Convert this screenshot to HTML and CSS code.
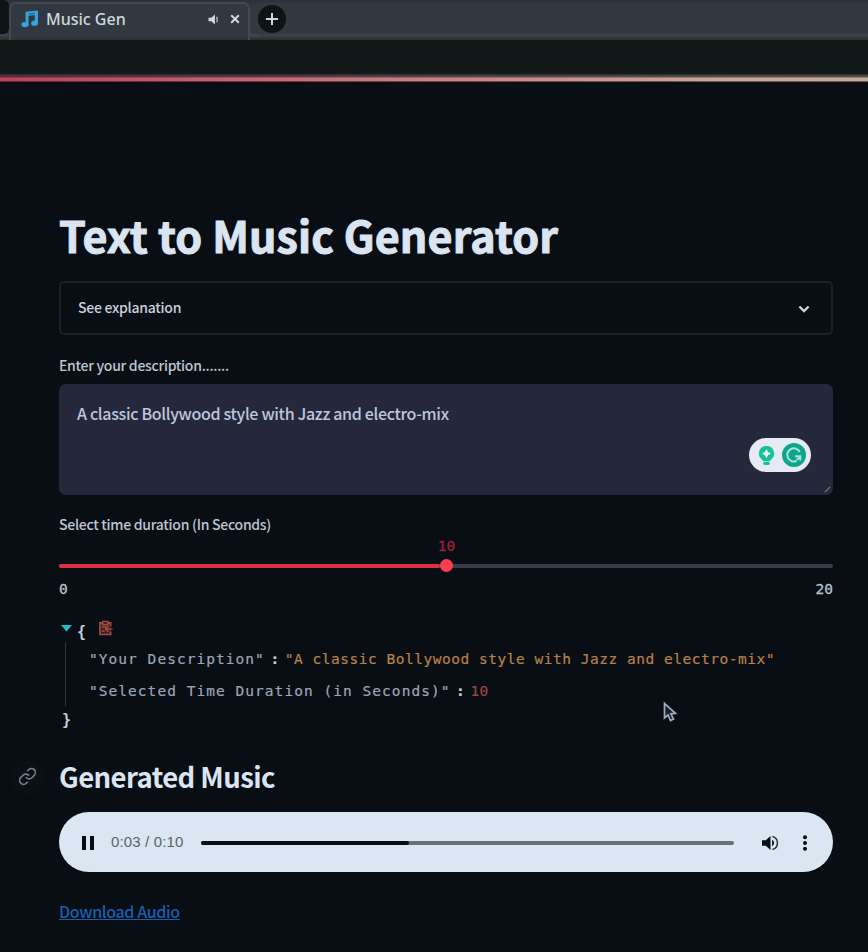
FILE: index.html
```html
<!DOCTYPE html>
<html lang="en">
<head>
<meta charset="utf-8">
<title>Music Gen</title>
<link rel="stylesheet" href="styles.css">
</head>
<body>
<header class="tabs">
  <div class="prev-tab"></div>
  <div class="tab">
    <svg class="note" viewBox="0 0 18 18"><path d="M4.600 1.800 17 .600v12.300H13.800V5L7.500 5.800v9.200H4.600z"/><path class="hole" d="M7.500 3.600 13.800 3v1L7.500 4.700z"/><ellipse cx="4" cy="14.600" rx="3.600" ry="2.600"/><ellipse cx="13.600" cy="13.200" rx="3.400" ry="2.600"/></svg>
    <span class="tab-title">Music Gen</span>
    <svg class="sound" viewBox="0 0 12 12"><path d="M0 4h3l4-3.400v10.800L3 8H0z"/><path class="wave" d="M9 3q1 3 0 6"/></svg>
    <svg class="close" viewBox="0 0 10 10"><path d="m1.200 1.200 7.600 7.600m0-7.600L1.200 8.800"/></svg>
  </div>
  <div class="new-tab"><svg viewBox="0 0 12 12"><path d="M6 0v12M0 6h12"/></svg></div>
</header>
<div class="toolbar"></div>
<div class="decoration"></div>
<main>
  <h1><span>Text to Music Generator</span></h1>
  <section class="expander">
    <span class="expander-label">See explanation</span>
    <svg viewBox="0 0 12 8"><path d="m1.400 1.500 4.600 4.600 4.600-4.600"/></svg>
  </section>
  <div class="label desc-label"><span>Enter your description.......</span></div>
  <div class="textarea">
    <span class="value">A classic Bollywood style with Jazz and electro-mix</span>
    <div class="assistant">
      <svg class="bulb" viewBox="0 0 18 22"><path d="M9 1a8 8 0 0 1 5 14.300L12.500 17h-7L4 15.300A8 8 0 0 1 9 1z"/><rect x="5.500" y="18" width="7" height="3" rx="1.500"/><path class="spark" d="M9 4.200 10.700 7.300 13.800 9l-3.100 1.700L9 13.800l-1.700-3.100L4.200 9l3.100-1.700z"/></svg>
      <svg class="g-logo" viewBox="0 0 24 24"><circle cx="12" cy="12" r="12"/><path d="M17.800 9A6.600 6.600 0 1 0 14.500 18M13 13.200h5.300v4.300M18 13.500l-3.200 3.600"/></svg>
    </div>
    <svg class="grip" viewBox="0 0 8 8"><path d="m1 7 6-6"/></svg>
  </div>
  <div class="label time-label"><span>Select time duration (In Seconds)</span></div>
  <div class="slider">
    <div class="mono thumb-value">10</div>
    <div class="track"><div class="filled"></div><div class="thumb"></div></div>
    <div class="mono limits"><span>0</span><span>20</span></div>
  </div>
  <div class="mono json">
    <div class="open"><svg class="arrow" viewBox="0 0 11 7"><path d="M0 0h11L5.500 6.500z"/></svg><span class="brace">{</span>
      <svg class="clip" viewBox="0 0 16 17"><path class="board" d="M2 3h11.500v12.500H2z"/><path d="M5 3H2v12.500h11.500V12M10.500 3h3v4M5 1.500h5.500v3.500H5zM4 7.500h5M4 12h3M15.500 9.500H8m3-3-3 3 3 3"/></svg></div>
    <div class="entries">
      <div class="row"><span class="key">"Your Description"</span><span class="colon">:</span><span class="string">"A classic Bollywood style with Jazz and electro-mix"</span></div>
      <div class="row"><span class="key">"Selected Time Duration (in Seconds)"</span><span class="colon">:</span><span class="number">10</span></div>
    </div>
    <div class="shut brace">}</div>
  </div>
  <div class="heading">
    <svg class="link" viewBox="0 0 24 24"><path d="M10 13a5 5 0 0 0 7.540.54l3-3a5 5 0 0 0-7.070-7.070l-1.720 1.710M14 11a5 5 0 0 0-7.540-.54l-3 3a5 5 0 0 0 7.070 7.070l1.710-1.710"/></svg>
    <h2><span>Generated Music</span></h2>
  </div>
  <div class="player">
    <svg class="pause" viewBox="0 0 12 14"><path d="M0 0h4v14H0zM8 0h4v14H8z"/></svg>
    <span class="time">0:03 / 0:10</span>
    <div class="seek"><div class="played"></div></div>
    <svg class="volume" viewBox="0 0 18 16"><path d="M0 5h4l5-4.500v15L4 11H0z"/><path d="M10.700 4.500a4 4 0 0 1 0 7z"/><path class="wave" d="M11 1.200a7 7 0 0 1 0 13.600"/></svg>
    <svg class="more" viewBox="0 0 4 16"><circle cx="2" cy="2.200" r="2"/><circle cx="2" cy="8" r="2"/><circle cx="2" cy="13.800" r="2"/></svg>
  </div>
  <a class="download"><span>Download Audio</span></a>
</main>
<svg class="cursor" viewBox="0 0 14 20"><path d="M1.500 1.500v14.500l3.500-3 2.500 5.500 3-1.400-2.600-5.300 4.600-.5z"/></svg>
</body>
</html>
```
FILE: styles.css
```css
* { box-sizing: border-box; }
body { margin: 0; width: 868px; height: 952px; overflow: hidden; background: #090d14; color: #dbe5f2; font-family: "Noto Sans CJK JP", "Noto Sans", sans-serif; white-space: nowrap; }
svg { display: block; flex: none; overflow: visible; fill: none; }
.tabs { height: 40px; display: flex; background: linear-gradient(#293037 0, #31383f 4px, #31383f 33px, #3d444a 35px, #30363a 38px, #262c2e 40px); }
.prev-tab { width: 9px; height: 34px; background: #0d1214; border-radius: 0 6px 6px 0; }
.tab { position: relative; width: 241px; height: 38px; margin-top: 2px; padding: 0 14px 6px 10px; display: flex; align-items: center; background: linear-gradient(#31383f 0, #31383f 90%, #2b3236); border: 2px solid #41484f; border-bottom: 0; border-radius: 7px 7px 0 0; }
.tab::after { content: ""; position: absolute; left: 237px; bottom: 3px; width: 9px; height: 9px; border: solid #41484f; border-width: 0 0 2px 2px; border-radius: 0 0 0 7px; }
.note { width: 18px; height: 18px; fill: #35a4df; }
.note .hole { fill: #1c6089; }
.tab-title { flex: none; margin-left: 7px; font: 500 16px/22px "Noto Sans", sans-serif; color: #d0d8df; width: 162px; }
.sound { width: 12px; height: 11px; fill: #d0d8df; }
.wave { fill: none; stroke: #d0d8df; stroke-width: 1.3; }
.close { width: 10px; height: 10px; margin-left: 10px; stroke: #d0d8df; stroke-width: 2; }
.new-tab { width: 28px; height: 28px; margin: 5px 0 0 8px; border-radius: 50%; background: #0e1315; display: grid; place-items: center; position: relative; }
.new-tab svg { width: 12px; height: 12px; stroke: #d0d8df; stroke-width: 2; }
.toolbar { height: 34px; background: #131819; }
.decoration { height: 9px; background: linear-gradient(#292c2e 0, #292c2eaa 3px, transparent 4px 7px, #14090d 8px, #090d14), linear-gradient(90deg, #bd405c, #c97982 45%, #c8a79c 85%, #c4ab97); }
main { padding: 125px 35px 0 59px; }
h1, h2 { margin: 0; }
h1 { height: 54px; font-size: 43px; line-height: 53px; font-weight: 700; letter-spacing: .120px; -webkit-text-stroke: 1px #dbe5f2; }
.expander { margin-top: 19px; height: 54px; padding: 0 21px 0 17px; display: flex; align-items: center; justify-content: space-between; border: 2px solid #1c2128; border-radius: 5px; font-size: 14px; line-height: 24px; color: #c8d1dc; }
.expander-label { position: relative; top: -1px; font-weight: 500; letter-spacing: -.270px; }
.expander svg { width: 12px; height: 8px; stroke: #ced6df; stroke-width: 2.3; position: relative; top: 1px; }
.label { height: 24px; font-size: 14px; line-height: 24px; color: #bdc6d2; font-weight: 500; letter-spacing: -.280px; }
.desc-label { margin-top: 18px; }
.textarea { position: relative; height: 111px; margin-top: 7px; padding: 17px 18px; border-radius: 7px; background: #25283a; font-size: 16px; line-height: 24px; color: #bcc7dd; font-weight: 500; letter-spacing: -.320px; }
.assistant { position: absolute; right: 22px; top: 54px; width: 62px; height: 34px; padding: 0 5px 0 9px; display: flex; align-items: center; justify-content: space-between; border-radius: 17px; background: #e5eaf4; }
.bulb { width: 17px; height: 21px; fill: #12c29b; }
.bulb .spark { fill: #e8f5f6; }
.g-logo { width: 24px; height: 24px; fill: #0fa58d; }
.g-logo path { fill: none; stroke: #a9e3dc; stroke-width: 2; }
.grip { position: absolute; right: 2px; bottom: 2px; width: 7px; height: 7px; stroke: #7b808d; stroke-width: 1.2; }
.time-label { margin-top: 17px; }
.mono { font-family: "DejaVu Sans Mono", monospace; }
.thumb-value { width: 775px; height: 20px; line-height: 21px; text-align: center; font-size: 14.500px; color: #a31d3c; -webkit-text-stroke: .3px; }
.track { height: 4px; margin-top: 7.500px; display: flex; align-items: center; border-radius: 2px; background: #363c48; }
.filled { width: 381px; height: 4px; border-radius: 2px; background: #dd3046; }
.thumb { width: 13px; height: 13px; border-radius: 50%; background: #ff3c4e; }
.limits { height: 22px; margin-top: 10.500px; display: flex; justify-content: space-between; font-size: 14.500px; line-height: 23px; color: #b9c3d0; -webkit-text-stroke: .3px; }
.json { margin-top: 18px; font-size: 14.500px; }
.open { height: 24px; display: flex; }
.arrow { width: 11px; height: 7px; margin: 7px 0 0 2px; fill: #18bfc6; }
.brace { font-weight: 700; color: #c5ced9; font-size: 15px; line-height: 28px; }
.open .brace { margin-left: 5px; }
.clip { width: 15px; height: 16px; margin: 2px 0 0 12px; stroke: #a04c40; stroke-width: 1.7; }
.clip .board { fill: #421f20; stroke: none; }
.entries { margin-left: 6px; height: 64px; border-left: 1px solid #303641; padding-left: 23px; }
.row { height: 32px; line-height: 35px; display: flex; color: #9ba6b5; -webkit-text-stroke: .2px; }
.key { letter-spacing: 1.040px; }
.colon { width: 20px; text-align: center; font-weight: 700; color: #c5ced9; }
.string { color: #b98045; letter-spacing: .520px; }
.number { color: #9c4546; letter-spacing: .400px; }
.shut { height: 28px; margin-left: 3px; }
.heading { display: flex; align-items: center; height: 44px; margin: 20px 0 0 -41px; }
.link { width: 19px; height: 19px; stroke: #757c87; stroke-width: 2.1; border-radius: 50%; background: #0c1118; box-shadow: 0 0 6px 8px #0c1118; }
h2 { margin-left: 22px; font-size: 27.500px; line-height: 40px; font-weight: 700; letter-spacing: -.580px; }
.player { height: 60px; margin-top: 14px; padding: 1px 25px 0 23px; display: flex; align-items: center; border-radius: 30px; background: #dae6f1; color: #59636d; }
.pause { width: 12px; height: 14px; fill: #080d13; }
.time { margin-left: 17px; width: 73px; font: 15px/20px "Liberation Sans", sans-serif; letter-spacing: .150px; position: relative; top: -1px; }
.seek { width: 533px; height: 4px; margin-left: 17px; border-radius: 2px; background: #67717c; }
.played { width: 208px; height: 4px; border-radius: 2px; background: #080d13; }
.volume { width: 17px; height: 16px; margin-left: 28px; fill: #080d13; }
.volume .wave { fill: none; stroke: #303840; stroke-width: 1.600; }
.more { width: 4px; height: 16px; margin-left: 24px; fill: #080d13; }
.download { display: block; margin-top: 26px; height: 26px; line-height: 26px; font-size: 16px; font-weight: 500; letter-spacing: -.350px; color: #175fae; text-decoration: underline; }
.cursor { position: absolute; left: 663px; top: 702px; width: 14px; height: 20px; fill: #161d2a; stroke: #9faabd; stroke-width: 1.700; }
```
